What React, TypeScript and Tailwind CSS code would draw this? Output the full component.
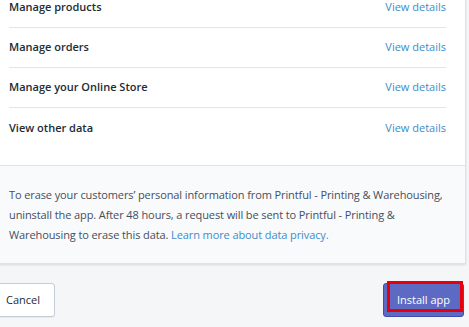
import React from 'react';

const rows = ['Manage products', 'Manage orders', 'Manage your Online Store', 'View other data'];

const PermissionRow: React.FC<{ label: string; last?: boolean }> = ({ label, last }) => (
  <div className={`flex items-center justify-between h-10 ${last ? '' : 'border-b border-[#e3e6e9]'}`}>
    <span className="font-semibold text-[#212b36]">{label}</span>
    <a className="text-[#3d8ccb]">View details</a>
  </div>
);

export default function App() {
  return (
    <div
      className="w-[469px] h-[327px] overflow-hidden bg-[#f4f6f8] text-[11px] text-[#212b36]"
      style={{ fontFamily: '"Open Sans", "Segoe UI", sans-serif' }}
    >
      <div className="ml-[-4px] w-[470px] bg-white border-r border-[#dfe3e8] shadow-[0_1px_2px_rgba(63,63,68,0.15)]">
        <div className="pl-[13px] pr-[19px] mt-[-12px] pb-[17px]">
          {rows.map((r, i) => (
            <PermissionRow key={r} label={r} last={i === rows.length - 1} />
          ))}
        </div>
        <div className="bg-[#f9fafb] border-t border-[#dfe3e8] border-b pl-[13px] pr-[4px] pt-[19px] pb-[18px] leading-[20px] text-[#454f5b] tracking-[-0.1px]">
          To erase your customers’ personal information from Printful - Printing &amp; Warehousing, uninstall the app.
          After 48 hours, a request will be sent to Printful - Printing &amp; Warehousing to erase this data.{' '}
          <a className="text-[#3d8ccb]">Learn more about data privacy.</a>
        </div>
      </div>
      <div className="flex items-center justify-between pt-[19px] pr-[5px]">
        <button className="ml-[-10px] h-[34px] pl-[15px] pr-[14px] bg-white border border-[#c4cdd5] rounded-[3px] shadow-[0_1px_0_rgba(22,29,37,0.05)] text-[#212b36]">
          Cancel
        </button>
        <button className="relative h-[34px] w-[81px] rounded-[3px] bg-[#5c6ac4] border border-[#3f4eae] text-white">
          <span className="absolute left-[3px] top-[-3px] w-[76px] h-[31px] border-[3px] border-[#e5000b]" />
          Install app
        </button>
      </div>
    </div>
  );
}
